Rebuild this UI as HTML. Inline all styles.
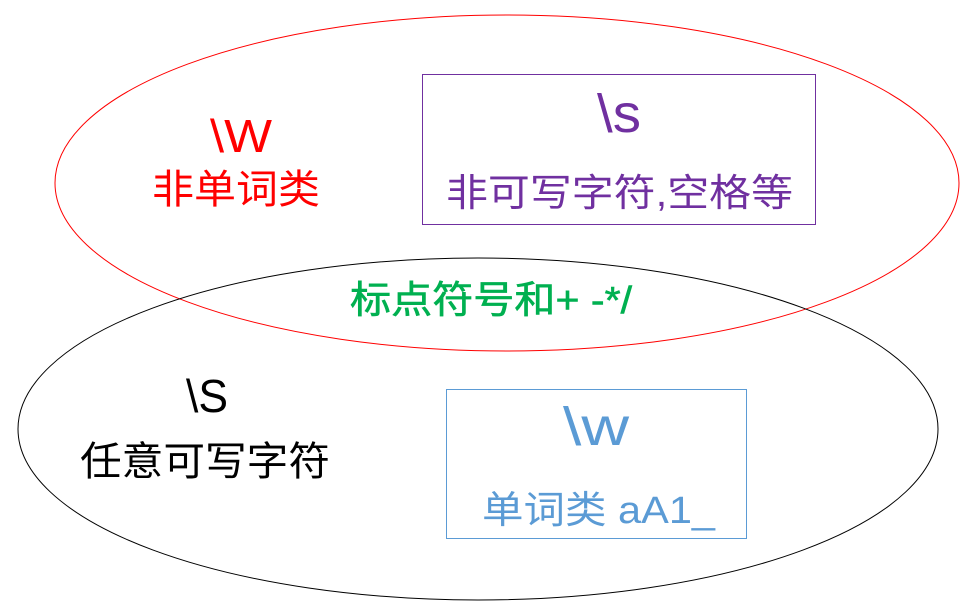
<!DOCTYPE html>
<html><head><meta charset="utf-8"><style>
html,body{margin:0;padding:0;background:#fff;width:969px;height:606px;overflow:hidden}
text{font-family:"Liberation Sans","Noto Sans CJK SC",sans-serif}
</style></head><body>
<svg width="969" height="606" viewBox="0 0 969 606" xmlns="http://www.w3.org/2000/svg">
<ellipse cx="507" cy="183" rx="452" ry="168" fill="none" stroke="#ff0000" stroke-width="1"/>
<ellipse cx="478" cy="429" rx="460" ry="171" fill="none" stroke="#000" stroke-width="1"/>
<rect x="422.5" y="74.5" width="393" height="150" fill="#fff" stroke="#7030a0" stroke-width="1"/>
<rect x="446.5" y="389.5" width="300" height="149" fill="#fff" stroke="#5b9bd5" stroke-width="1"/>
<text x="210" y="152" font-size="46" fill="#ff0000" textLength="62" lengthAdjust="spacingAndGlyphs">\W</text>
<text x="152" y="203" font-size="40" fill="#ff0000" textLength="168" lengthAdjust="spacingAndGlyphs">非单词类</text>
<text x="597" y="132" font-size="54" fill="#7030a0" textLength="44" lengthAdjust="spacingAndGlyphs">\s</text>
<text x="446" y="206" font-size="38" fill="#7030a0" textLength="347" lengthAdjust="spacingAndGlyphs">非可写字符,空格等</text>
<text x="350" y="313" font-size="38" fill="#00b050" stroke="#00b050" stroke-width="0.6" textLength="282" lengthAdjust="spacingAndGlyphs">标点符号和+ -*/</text>
<text x="186" y="412" font-size="46" fill="#000" textLength="42" lengthAdjust="spacingAndGlyphs">\S</text>
<text x="80" y="475" font-size="40" fill="#000" textLength="250" lengthAdjust="spacingAndGlyphs">任意可写字符</text>
<text x="563" y="445" font-size="54" fill="#5b9bd5" textLength="66" lengthAdjust="spacingAndGlyphs">\w</text>
<text x="482" y="523" font-size="38" fill="#5b9bd5" textLength="233" lengthAdjust="spacingAndGlyphs">单词类 aA1_</text>
</svg>
</body></html>
